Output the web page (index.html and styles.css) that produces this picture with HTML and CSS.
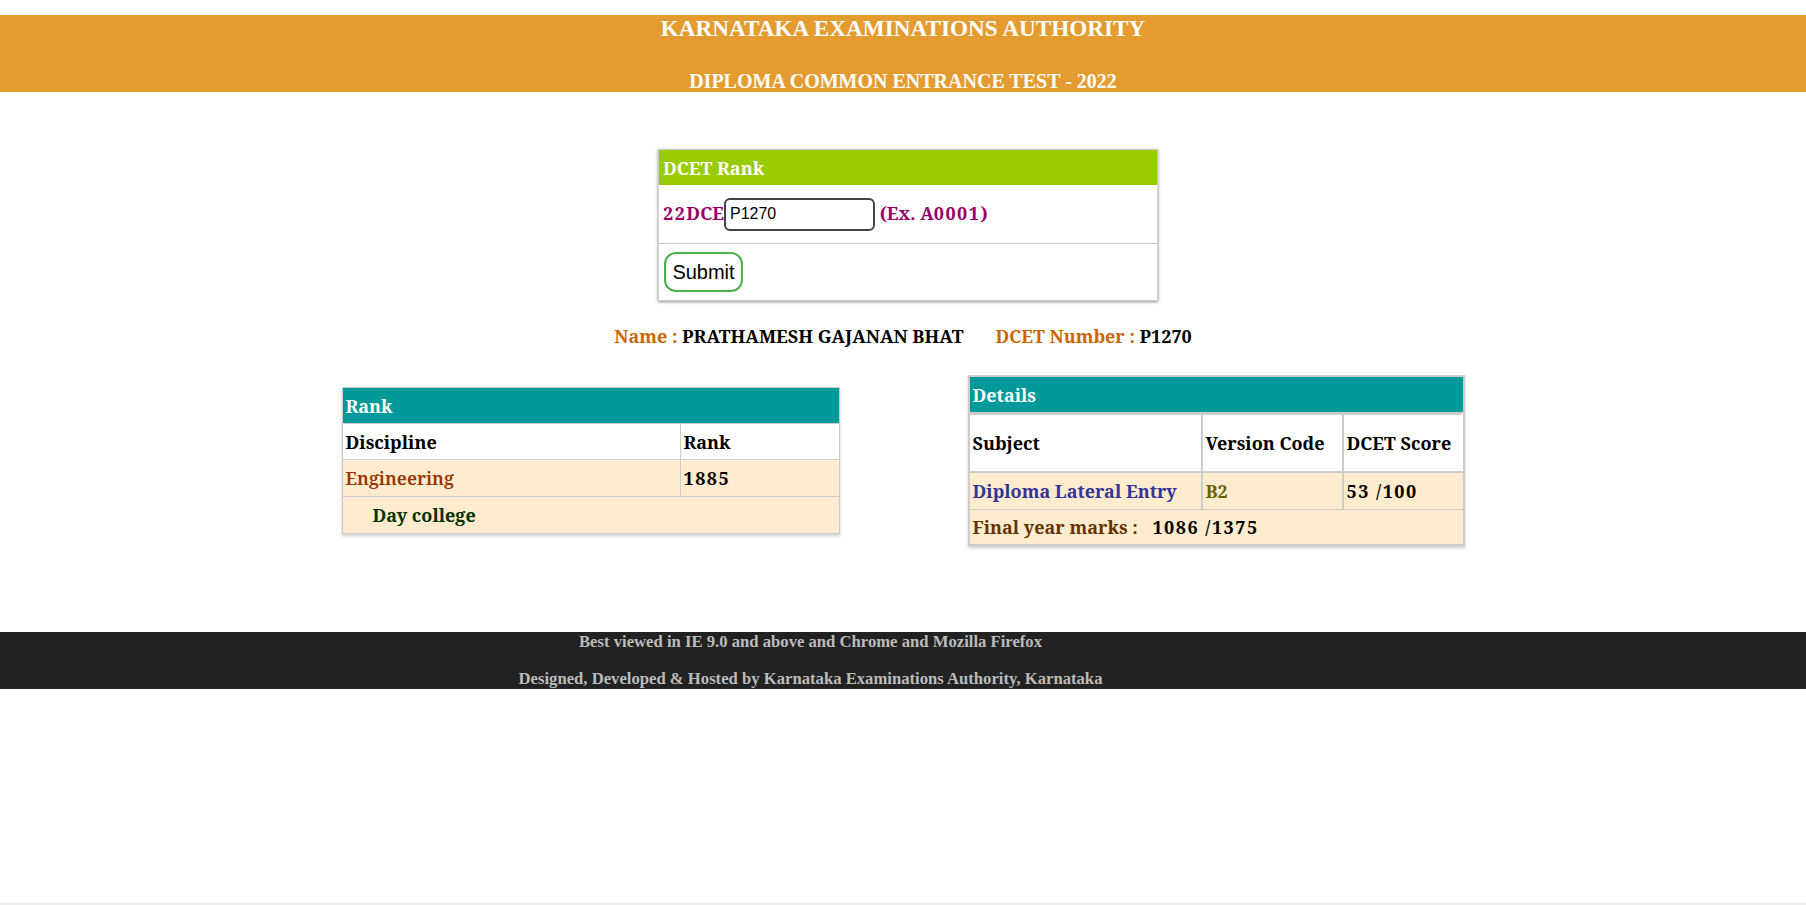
FILE: index.html
```html
<!DOCTYPE html>
<html lang="en">
<head>
<meta charset="utf-8">
<title>DCET Rank</title>
<link rel="stylesheet" href="styles.css">
</head>
<body>
<header class="top">
  <div class="t1">KARNATAKA EXAMINATIONS AUTHORITY</div>
  <div class="t2">DIPLOMA COMMON ENTRANCE TEST - 2022</div>
</header>
<main class="main">
  <table class="dcet">
    <tr><th class="dcet-h">DCET Rank</th></tr>
    <tr><td class="dcet-in"><span class="lbl"><span class="n">22</span>DCE</span><input class="inp" type="text" value="P1270"> <span class="lbl">(Ex. A<span class="n">0001</span>)</span></td></tr>
    <tr><td class="dcet-btn"><button class="btn" type="button">Submit</button></td></tr>
  </table>
  <div class="namerow"><span class="k">Name : </span><span class="v">PRATHAMESH GAJANAN BHAT</span><span class="gap"></span><span class="k">DCET Number : </span><span class="v">P1270</span></div>
  <div class="tables">
    <table class="rank">
      <tr><th class="th-teal" colspan="2">Rank</th></tr>
      <tr class="r-white"><td class="c1">Discipline</td><td class="c2">Rank</td></tr>
      <tr class="r-beige"><td class="c1 eng">Engineering</td><td class="c2 n">1885</td></tr>
      <tr class="r-beige"><td class="day" colspan="2">Day college</td></tr>
    </table>
    <table class="details">
      <tr><th class="th-teal dth" colspan="3">Details</th></tr>
      <tr class="d-white"><td class="dc1">Subject</td><td class="dc2">Version Code</td><td class="dc3">DCET Score</td></tr>
      <tr class="d-beige"><td class="dc1 sub">Diploma Lateral Entry</td><td class="dc2 ver">B2</td><td class="dc3 n">53 /100</td></tr>
      <tr class="d-beige2"><td colspan="3"><span class="fym">Final year marks : </span><span class="fyv n">1086 /1375</span></td></tr>
    </table>
  </div>
</main>
<footer class="foot">
  <div class="foot-in">
    <p class="f1">Best viewed in IE 9.0 and above and Chrome and Mozilla Firefox</p>
    <p class="f2">Designed, Developed &amp; Hosted by Karnataka Examinations Authority, Karnataka</p>
  </div>
</footer>
<div class="bottomline"></div>
</body>
</html>
```

FILE: styles.css
```css
html, body { margin: 0; padding: 0; background: #fff; }
body { font-family: "Noto Serif", "DejaVu Serif", serif; }

.top { box-sizing: border-box; margin-top: 15px; height: 77px; padding-top: 1px; background: #e49c30; color: #fff;
  text-align: center; font-family: "Liberation Serif", serif; font-weight: bold; }
.t1 { font-size: 23.2px; line-height: 24px; }
.t2 { font-size: 20px; line-height: 24px; margin-top: 29px; }

.main { padding-top: 57px; }

.n { letter-spacing: 1.5px; }

.dcet { margin-left: calc(50% - 245px); width: 500px; border: 1px solid #ccc; border-collapse: separate;
  border-spacing: 0; box-shadow: 0 1px 3px rgba(0,0,0,0.45); font-size: 18px; }
.dcet td, .dcet th { box-sizing: border-box; padding: 0 4px; text-align: left; vertical-align: middle; }
.dcet-h { height: 35px; background: #99cc00; color: #fff; font-weight: bold; }
.dcet-in { height: 59px; border-bottom: 1px solid #ccc; }
.dcet-btn { height: 56px; padding-left: 5px !important; }
.lbl { color: #990066; font-weight: bold; }
.inp { box-sizing: border-box; width: 151px; height: 33px; border: 2px solid #444; border-radius: 6px;
  padding: 0 4px; font: 16px "Liberation Sans", Arial, sans-serif; color: #000; margin: 0; }
.btn { box-sizing: border-box; width: 79px; height: 40px; border: 2px solid #4caf50; border-radius: 12px;
  background: #fff; font: 20px "Liberation Sans", Arial, sans-serif; color: #000; padding: 0; }

.namerow { text-align: center; margin-top: 23px; line-height: 24px; font-size: 18px; font-weight: bold; }
.k { color: #cc6600; }
.v { color: #000; }
.gap { display: inline-block; width: 32px; }

.tables { display: flex; justify-content: center; align-items: flex-start; gap: 128px; margin-top: 27px; }
.rank { margin-top: 12px; width: 498px; border: 1px solid #ccc; border-collapse: separate; border-spacing: 0;
  box-shadow: 0 2px 3px rgba(0,0,0,0.2); font-weight: bold; font-size: 18px; }
.rank td, .rank th { box-sizing: border-box; padding: 0 3px; text-align: left; vertical-align: middle; }
.th-teal { background: #009999; color: #fff; height: 35px; }
.r-white td { background: #fff; border-top: 1px solid #ccc; height: 36px; }
.r-beige td { background: #ffebcd; border-top: 1px solid #ccc; height: 37px; }
.rank .c1 { width: 338px; border-right: 1px solid #ccc; }
.eng { color: #993300; font-weight: 600; }
.day { color: #003300; padding-left: 30px !important; }

.details { width: 497px; border: 2px solid #ccc; border-collapse: separate; border-spacing: 0;
  box-shadow: 0 2px 3px rgba(0,0,0,0.2); font-weight: bold; font-size: 18px; }
.details td, .details th { box-sizing: border-box; padding: 0 3px; text-align: left; vertical-align: middle; }
.dth { height: 38px; border-bottom: 3px solid #ccc; border-bottom-right-radius: 4px; }
.d-white td { height: 58px; border-bottom: 2px solid #ccc; background: #fff; }
.d-beige td { height: 37px; border-bottom: 1px solid #ccc; background: #ffebcd; }
.d-beige2 td { height: 34px; background: #ffebcd; }
.dc1 { width: 233px; border-right: 2px solid #ccc; }
.dc2 { width: 141px; border-right: 2px solid #ccc; }
.sub { color: #333399; }
.ver { color: #666600; }
.fym { color: #663300; }
.fyv { color: #000; padding-left: 10px; }

.foot { margin-top: 86px; height: 57px; background: #222; }
.foot-in { box-sizing: border-box; width: 1621px; padding-top: 1px; text-align: center; font-family: "Liberation Serif", serif;
  font-weight: bold; font-size: 16.67px; color: #bbb; line-height: 18px; }
.foot-in p { margin: 0; }
.f2 { margin-top: 19px !important; }

.bottomline { position: fixed; left: 0; right: 0; bottom: 0; height: 2px; background: #ededed; }
```
